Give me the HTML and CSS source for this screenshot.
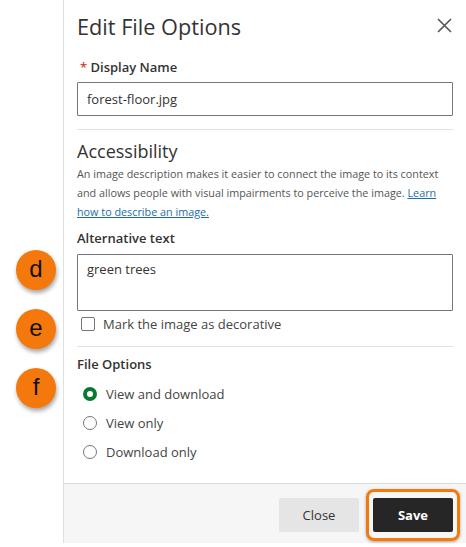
FILE: index.html
```html
<!DOCTYPE html>
<html lang="en">
<head>
<meta charset="utf-8">
<title>Edit File Options</title>
<link rel="stylesheet" href="styles.css">
</head>
<body>
<div class="page">
  <div class="gutter">
    <span class="badge badge-d">d</span>
    <span class="badge badge-e">e</span>
    <span class="badge badge-f">f</span>
  </div>
  <div class="panel">
    <div class="content">
      <div class="header">
        <h1 class="title">Edit File Options</h1>
        <svg class="close-x" width="15" height="15" viewBox="0 0 15 15"><path d="M1 1 L14 14 M14 1 L1 14" stroke="#555" stroke-width="1.6" fill="none"/></svg>
      </div>
      <div class="label label-first"><span class="req">*</span> Display Name</div>
      <div class="input">forest-floor.jpg</div>
      <div class="rule"></div>
      <h2 class="section">Accessibility</h2>
      <p class="desc">An image description makes it easier to connect the image to its context and allows people with visual impairments to perceive the image. <a class="link" href="#">Learn how to describe an image.</a></p>
      <div class="label label-alt">Alternative text</div>
      <div class="textarea">green trees</div>
      <div class="check-row"><span class="checkbox"></span><span>Mark the image as decorative</span></div>
      <div class="rule rule-2"></div>
      <div class="label label-file">File Options</div>
      <div class="radios">
        <div class="radio-row"><span class="radio radio-on"></span><span>View and download</span></div>
        <div class="radio-row"><span class="radio"></span><span>View only</span></div>
        <div class="radio-row"><span class="radio"></span><span>Download only</span></div>
      </div>
    </div>
    <div class="footer">
      <button class="btn btn-close">Close</button>
      <button class="btn btn-save">Save</button>
    </div>
  </div>
</div>
</body>
</html>
```
FILE: styles.css
```css
* { box-sizing: border-box; }
html, body { margin: 0; padding: 0; background: #fff; }
body { font-family: "Open Sans", "Noto Sans", sans-serif; color: #333; }
.page { display: flex; height: 547px; }
.gutter { position: relative; width: 63px; flex: none; }
.badge {
  position: absolute; left: 16px; width: 40px; height: 40px; border-radius: 50%;
  background: #f5780c; color: #111; font-family: "Liberation Sans", Arial, sans-serif;
  font-size: 24px; line-height: 38px; text-align: center;
  box-shadow: 1px 3px 4px rgba(0,0,0,0.35);
}
.badge-d { top: 250px; }
.badge-e { top: 309px; }
.badge-f { top: 368px; }
.panel {
  width: 403px; height: 543px; border-left: 1px solid #e0e0e0;
  display: flex; flex-direction: column;
}
.content { flex: 1; padding: 12px 13px 0 13px; }
.header { display: flex; justify-content: space-between; align-items: center; height: 30px; }
.title { margin: 0; font-size: 21.7px; line-height: 30px; font-weight: 400; color: #333; }
.close-x { margin-right: 1px; margin-top: -3px; }
.label { font-size: 13px; line-height: 18px; font-weight: 600; color: #333; }
.label-first { margin-top: 16px; padding-left: 3px; }
.req { color: #d0473b; }
.input, .textarea {
  border: 1px solid #767676; border-radius: 1px; font-size: 13px; color: #333;
  padding: 0 9px;
}
.input { margin-top: 6px; height: 34px; line-height: 32px; }
.rule { height: 1px; background: #e2e2e2; margin-top: 13px; }
.section { margin: 9px 0 0 0; font-size: 18px; line-height: 24px; font-weight: 400; color: #333; }
.desc { margin: 1px 0 0 0; font-size: 10.8px; line-height: 19px; color: #555; }
.link { color: #1d6ea8; text-decoration: underline; }
.label-alt { margin-top: 8px; }
.textarea { margin-top: 7px; height: 57px; line-height: 18px; padding-top: 5px; }
.check-row { display: flex; align-items: center; margin-top: 4px; height: 18px; font-size: 13px; line-height: 18px; color: #444; padding-left: 4px; }
.checkbox { width: 14px; height: 14px; border: 1px solid #767676; border-radius: 2px; margin-right: 8px; }
.rule-2 { margin-top: 13px; }
.label-file { margin-top: 8px; }
.radios { margin-top: 12px; display: flex; flex-direction: column; gap: 11px; }
.radio-row { display: flex; align-items: center; height: 18px; font-size: 13px; line-height: 18px; color: #444; padding-left: 6px; }
.radio { width: 14px; height: 14px; border-radius: 50%; border: 1px solid #767676; margin-right: 9px; }
.radio-on { border: 4px solid #087a30; background: #fff; }
.footer {
  height: 60px; border-top: 1px solid #dcdcdc; background: #f6f6f6;
  display: flex; justify-content: flex-end; align-items: flex-start;
  padding: 14px 13px 0 0; gap: 14px;
}
.btn {
  width: 80px; height: 34px; border: none; border-radius: 2px;
  font-family: "Open Sans", "Noto Sans", sans-serif; font-size: 13px; cursor: pointer;
}
.btn-close { background: #e5e5e5; color: #333; }
.btn-save { background: #262626; color: #fff; font-weight: 700; position: relative; }
.btn-save::after {
  content: ""; position: absolute; left: -7px; right: -7px; top: -9px; bottom: -9px;
  border: 3.5px solid #f5780c; border-radius: 8px;
  box-shadow: 0 1px 3px rgba(0,0,0,0.35);
}
```
